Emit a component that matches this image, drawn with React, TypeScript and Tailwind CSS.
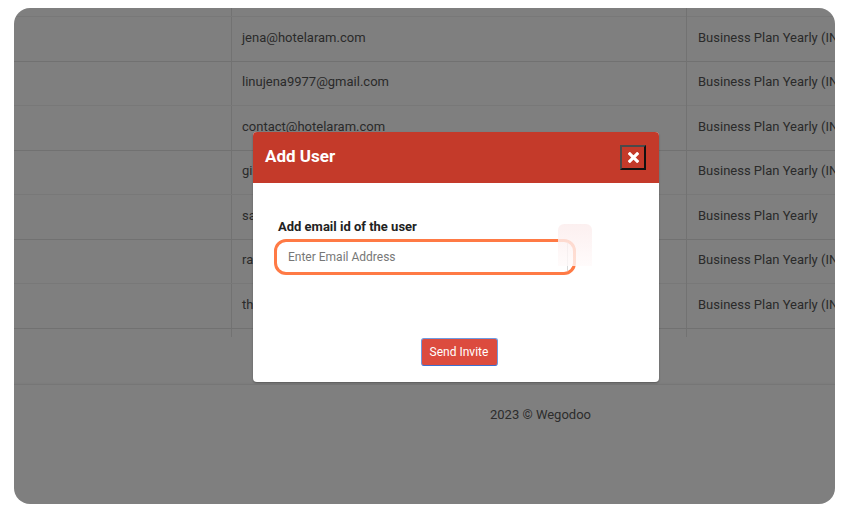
import React from "react";

const rows = [
  { email: "jena@hotelaram.com", plan: "Business Plan Yearly (INR)" },
  { email: "linujena9977@gmail.com", plan: "Business Plan Yearly (INR)" },
  { email: "contact@hotelaram.com", plan: "Business Plan Yearly (INR)" },
  { email: "giri@hotelaram.com", plan: "Business Plan Yearly (INR)" },
  { email: "sales@hotelaram.com", plan: "Business Plan Yearly" },
  { email: "rakesh@hotelaram.com", plan: "Business Plan Yearly (INR)" },
  { email: "theo@hotelaram.com", plan: "Business Plan Yearly (INR)" },
];

export default function App() {
  return (
    <div
      className="w-[850px] h-[518px] bg-white pl-[14px] pt-[8px] overflow-hidden"
      style={{ fontFamily: "Roboto, 'Liberation Sans', sans-serif" }}
    >
      <div className="relative w-[821px] h-[496px] rounded-[16px] overflow-hidden bg-white">
        {/* page content */}
        <div className="flex flex-col h-full">
          <div className="h-[9px] border-b border-[#f0f0f0] flex">
            <div className="w-[218px] border-r border-[#e4e4e4]" />
            <div className="w-[455px] border-r border-[#e4e4e4]" />
          </div>
          {rows.map((r, i) => (
            <div
              key={i}
              className={`flex h-[44.5px] border-b ${i % 2 === 0 ? "border-[#e2e2e2]" : "border-[#f0f0f0]"} text-[13px] text-[#555]`}
            >
              <div className="w-[218px] shrink-0 border-r border-[#e4e4e4]" />
              <div className="w-[455px] shrink-0 border-r border-[#e4e4e4] flex items-center pl-[10px] -mt-[3px]">
                {r.email}
              </div>
              <div className="flex-1 min-w-0 flex items-center pl-[11px] whitespace-nowrap overflow-hidden -mt-[3px]">
                {r.plan}
              </div>
            </div>
          ))}
          <div className="h-[8px] flex">
            <div className="w-[218px] border-r border-[#e4e4e4]" />
            <div className="w-[455px] border-r border-[#e4e4e4]" />
          </div>
          <div className="h-[47px]" />
          <div className="flex-1 border-t border-[#ececec] shadow-[0_-1px_2px_rgba(0,0,0,0.04)] pt-[20px] pl-[476px] text-[13px] text-[#5a5a5a]">
            2023 © Wegodoo
          </div>
        </div>

        {/* overlay */}
        <div className="absolute inset-0 bg-black/50" />

        {/* modal */}
        <div className="absolute left-[239px] top-[124px] w-[406px] h-[250px] bg-white rounded-[4px] overflow-hidden flex flex-col shadow-[0_1px_2px_rgba(0,0,0,0.3)]">
          <div className="h-[51px] bg-[#c43a2a] flex items-center justify-between pl-[12px] pr-[13px]">
            <span className="text-white font-bold text-[17px] -mt-[2px]">Add User</span>
            <button className="w-[26px] h-[25px] bg-[#c43a2a] border-2 border-t-[#4a4a4a] border-l-[#4a4a4a] border-b-[#111] border-r-[#111] flex items-center justify-center">
              <svg width="11" height="11" viewBox="0 0 12 12">
                <path d="M2 2 L10 10 M10 2 L2 10" stroke="#fff" strokeWidth="3.4" strokeLinecap="square" />
              </svg>
            </button>
          </div>
          <div className="relative flex-1 flex flex-col px-[21px] pt-[36px]">
            <label className="text-[13px] font-bold text-[#222] pl-[4px] leading-[16px]">
              Add email id of the user
            </label>
            <div className="mt-[4px] w-[302px] h-[36px] rounded-[12px] border-[3px] border-[#ff7a45] flex items-stretch overflow-hidden">
              <div className="flex-1 mr-[5px] border-r border-[#d8d8d8] flex items-center pl-[11px] text-[12px] text-[#777]">
                Enter Email Address
              </div>
            </div>
            <div className="absolute left-[305px] top-[41px] w-[34px] h-[42px] bg-gradient-to-b from-[#fbecec] to-[#fffafa] rounded-t-[6px] opacity-80" />
            <div className="flex justify-center mt-[63px] pl-[6px]">
              <button className="w-[77px] h-[28px] rounded-[3px] bg-[#dc4b3e] border border-[#6f9ae0] border-b-[#3c6fd0] text-white text-[12px]">
                Send Invite
              </button>
            </div>
          </div>
        </div>
      </div>
    </div>
  );
}
